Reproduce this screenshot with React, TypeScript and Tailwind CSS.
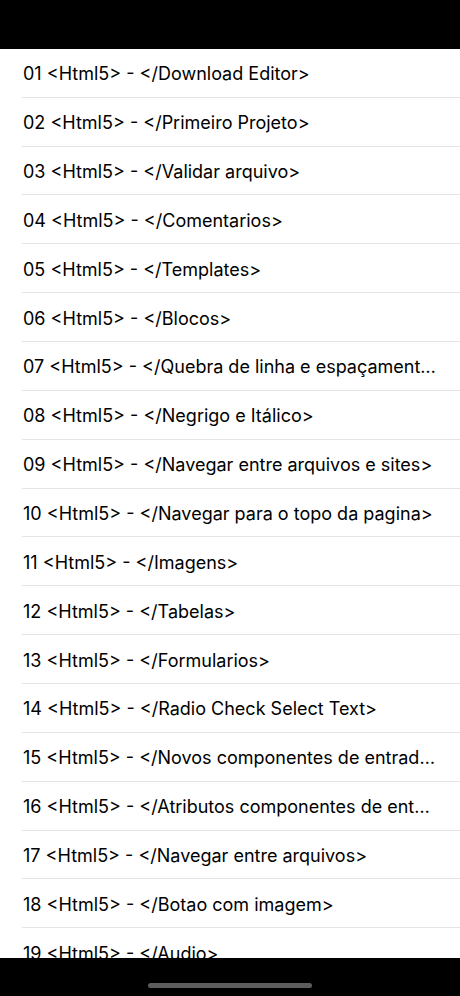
const items = [
  'Download Editor',
  'Primeiro Projeto',
  'Validar arquivo',
  'Comentarios',
  'Templates',
  'Blocos',
  'Quebra de linha e espaçamento entre linhas',
  'Negrigo e Itálico',
  'Navegar entre arquivos e sites',
  'Navegar para o topo da pagina',
  'Imagens',
  'Tabelas',
  'Formularios',
  'Radio Check Select Text',
  'Novos componentes de entrada de dados',
  'Atributos componentes de entrada',
  'Navegar entre arquivos',
  'Botao com imagem',
  'Audio',
  'Video',
];

export default function App() {
  return (
    <div className="flex h-[996px] w-[460px] flex-col overflow-hidden bg-white font-['Inter','Noto_Sans',sans-serif] text-black">
      <div className="h-[48.8px] shrink-0 bg-black" />
      <ul className="flex-1 overflow-hidden">
        {items.map((title, i) => (
          <li key={title} className="pl-[22px]">
            <div className="flex h-[48.86px] items-center border-b border-[#e4e4e6] pr-[24px] pt-[2px]">
              <span className="truncate pl-px text-[18px]">
                {String(i + 1).padStart(2, '0')} &lt;Html5&gt; - &lt;/{title}&gt;
              </span>
            </div>
          </li>
        ))}
      </ul>
      <div className="flex h-[38px] shrink-0 items-end justify-center bg-black pb-[8px]">
        <div className="h-[5px] w-[164px] rounded-full bg-[#5c5c5c]" />
      </div>
    </div>
  );
}
